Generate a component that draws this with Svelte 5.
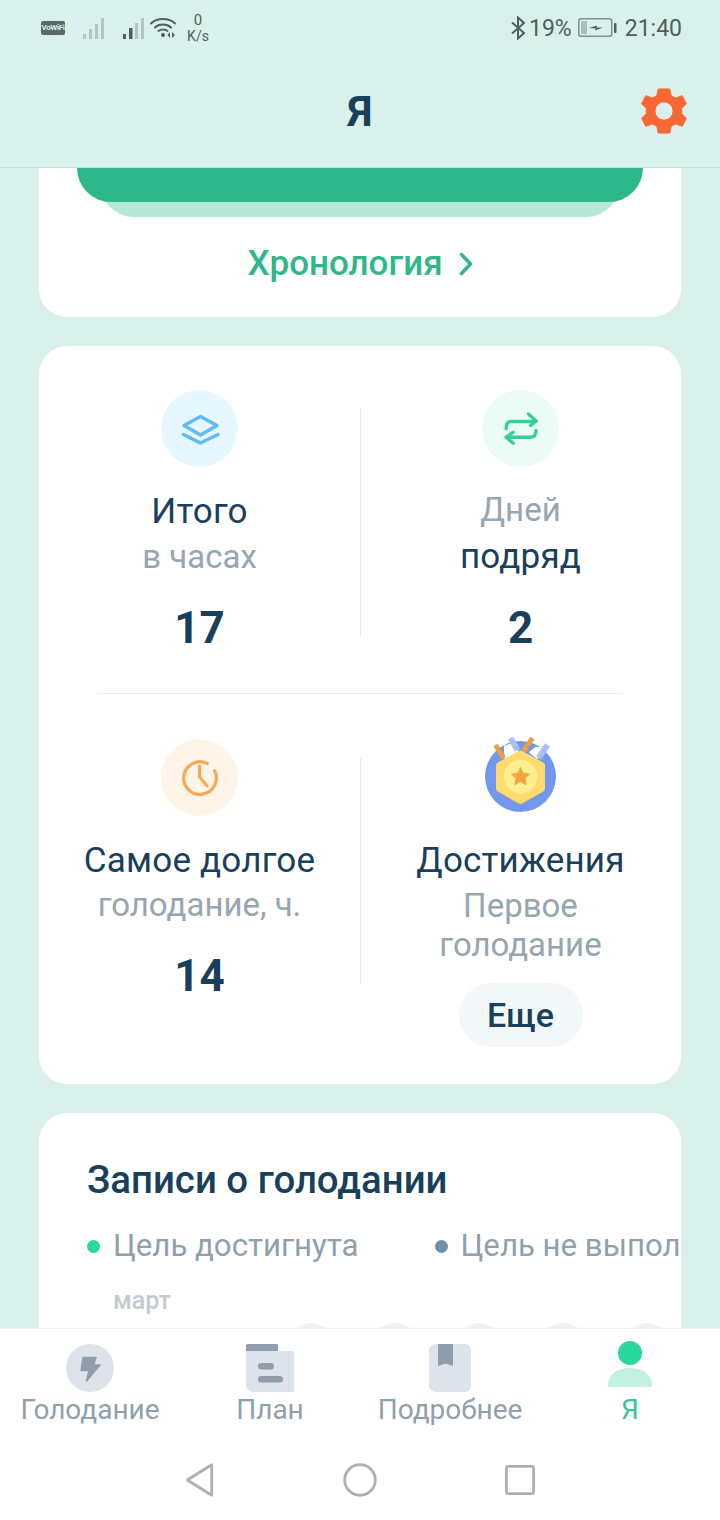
<script>
	const days = [0, 1, 2, 3, 4];
</script>

<div class="page">
	<header class="top">
		<div class="status">
			<div class="status-left">
				<span class="vowifi">VoWiFi</span>
				<svg class="signal first" width="22" height="21" viewBox="0 0 22 21">
					<rect x="0" y="16" width="3" height="5" fill="#b4c6c1" />
					<rect x="6" y="11" width="3" height="10" fill="#b4c6c1" />
					<rect x="12" y="6" width="3" height="15" fill="#b4c6c1" />
					<rect x="18" y="0" width="3" height="21" fill="#b4c6c1" />
				</svg>
				<svg class="signal second" width="22" height="21" viewBox="0 0 22 21">
					<rect x="0" y="16" width="3" height="5" fill="#4f5f5c" />
					<rect x="6" y="10" width="3.5" height="11" fill="#4f5f5c" />
					<rect x="12" y="5" width="3" height="16" fill="#b4c6c1" />
					<rect x="18" y="0" width="3" height="21" fill="#b4c6c1" />
				</svg>
				<svg class="wifi" width="26" height="22" viewBox="0 0 26 22" fill="none" stroke="#4f5f5c" stroke-width="2" stroke-linecap="round">
					<path d="M1 6.5 C7 0.5 19 0.5 25 6.5" />
					<path d="M5 10.5 C9 6.5 17 6.5 21 10.5" />
					<path d="M8.5 14 C11 12 15 12 17.5 14" />
					<circle cx="13" cy="18" r="2" fill="#4f5f5c" stroke="none" />
					<path d="M20 15 L20 21 L17.5 18 Z M22 15 L22 21 L25 18 Z" fill="#4f5f5c" stroke="none" />
				</svg>
				<div class="speed"><span class="zero">0</span><span>K/s</span></div>
			</div>
			<div class="status-right">
				<svg width="16" height="24" viewBox="0 0 16 24" fill="none" stroke="#4f5f5c" stroke-width="2">
					<path d="M2 6.5 L14 17 L8 22.5 L8 1.5 L14 7 L2 17.5" />
				</svg>
				<span class="pct">19%</span>
				<svg class="batt" width="40" height="20" viewBox="0 0 40 20" fill="none">
					<rect x="0.75" y="0.75" width="33" height="17.5" rx="2.5" stroke="#7e918d" stroke-width="1.5" />
					<rect x="3" y="3" width="6" height="13" fill="#adbfba" />
					<path d="M11 10 L19 7.5 L18.5 9.5 L25 9.5 L17 12.5 L17.5 10.5 Z" fill="#4f5f5c" />
					<rect x="36" y="5" width="2.5" height="10" rx="1" fill="#4f5f5c" />
				</svg>
				<span class="clock">21:40</span>
			</div>
		</div>
		<div class="title-row">
			<h1>Я</h1>
			<svg class="gear" width="46" height="46" viewBox="0 0 48 48">
				<path fill="#fb6633" stroke="#fb6633" stroke-width="1" stroke-linejoin="round" fill-rule="evenodd" d="M18 1 H30 L31.5 8 L36 10.5 L43 8 L47.5 16.5 L42.5 21 V27 L47.5 31.5 L43 40 L36 37.5 L31.5 40 L30 47 H18 L16.5 40 L12 37.5 L5 40 L0.5 31.5 L5.5 27 V21 L0.5 16.5 L5 8 L12 10.5 L16.5 8 Z M24 14.5 A9.5 9.5 0 1 0 24 33.5 A9.5 9.5 0 1 0 24 14.5 Z" />
			</svg>
		</div>
	</header>

	<main class="scroll">
		<section class="card history">
			<div class="bars">
				<div class="bar-back"></div>
				<div class="bar-front"></div>
			</div>
			<div class="timeline-link">
				<span>Хронология</span>
				<svg width="14" height="24" viewBox="0 0 14 24" fill="none" stroke="#2fb78a" stroke-width="3.5" stroke-linecap="round" stroke-linejoin="round">
					<path d="M2.5 2.5 L11.5 12 L2.5 21.5" />
				</svg>
			</div>
		</section>

		<section class="card stats">
			<div class="stat-row">
				<div class="stat">
					<div class="icon-circle blue">
						<svg width="40" height="32" viewBox="0 0 40 32" fill="none" stroke="#5dbdf6" stroke-width="3.4" stroke-linecap="round" stroke-linejoin="round">
							<path d="M20.5 3.5 L37 12.5 L20.5 22 L4 12.5 Z" />
							<path d="M3.5 21.5 L20.5 30 L38 21.5" />
						</svg>
					</div>
					<div class="label">Итого</div>
					<div class="sub">в часах</div>
					<div class="value">17</div>
				</div>
				<div class="stat">
					<div class="icon-circle green">
						<svg width="36" height="34" viewBox="0 0 36 34" fill="none" stroke="#37cf99" stroke-width="3.4" stroke-linecap="round" stroke-linejoin="round">
							<path d="M3.2 16.5 Q3.2 9.5 8 9.5 H33" />
							<path d="M25.5 2 L33 9 L27.5 13.5" />
							<path d="M33 18.5 Q33 25.2 27.5 25.2 H3.2" />
							<path d="M10.2 31.2 L3.2 25.2 L10.2 20.2" />
						</svg>
					</div>
					<div class="sub">Дней</div>
					<div class="label tight">подряд</div>
					<div class="value">2</div>
				</div>
			</div>
			<div class="rule"></div>
			<div class="stat-row lower">
				<div class="stat">
					<div class="icon-circle orange">
						<svg width="38" height="38" viewBox="0 0 38 38" fill="none" stroke="#f4aa55" stroke-width="3.2" stroke-linecap="round" stroke-linejoin="round">
							<path d="M26.3 4.5 A16.3 16.3 0 1 0 33.6 11.8" />
							<path d="M18.5 7 V18 L26 26.7" />
						</svg>
					</div>
					<div class="label">Самое долгое</div>
					<div class="sub">голодание, ч.</div>
					<div class="value">14</div>
				</div>
				<div class="stat">
					<svg class="medal" width="76" height="78" viewBox="0 0 76 78">
						<circle cx="37.5" cy="39.5" r="35.5" fill="#7497ee" />
						<path d="M20.8 8.7 L29.2 6 L36.8 15.3 L21.5 22 Z M52.5 10 L61.5 10 L54.2 22 L45.8 15.3 Z" fill="#fff" />
						<path d="M27.5 1 L34.5 13 M64.5 8 L55.5 21" stroke="#a9c0f6" stroke-width="6" fill="none" />
						<path d="M12.5 8 L20.5 21 M49.5 1 L40.5 14" stroke="#ec9f3d" stroke-width="5" fill="none" />
						<path d="M37.5 17 L58.5 28.5 V51 L37.5 63 L16.5 51 V28.5 Z" fill="#f0c050" stroke="#f0c050" stroke-width="7" stroke-linejoin="round" transform="translate(0 0.8)" />
						<path d="M37.5 17 L58.5 28.5 V51 L37.5 63 L16.5 51 V28.5 Z" fill="#fcdc6e" stroke="#fcdc6e" stroke-width="7" stroke-linejoin="round" />
						<circle cx="37.5" cy="39.7" r="16.7" fill="#fdee8f" />
						<path d="M37.5 30.5 L40.1 36.4 L46.5 37.1 L41.8 41.4 L43.1 47.7 L37.5 44.5 L31.9 47.7 L33.2 41.4 L28.5 37.1 L34.9 36.4 Z" fill="#f7a33b" stroke="#f7a33b" stroke-width="1" stroke-linejoin="round" />
					</svg>
					<div class="label">Достижения</div>
					<div class="sub multi">Первое голодание</div>
					<button class="more">Еще</button>
				</div>
			</div>
		</section>

		<section class="card records">
			<h2>Записи о голодании</h2>
			<div class="legend">
				<span class="legend-item"><i class="dot ok"></i>Цель достигнута</span>
				<span class="legend-item"><i class="dot miss"></i>Цель не выполнена</span>
			</div>
			<div class="month">март</div>
			<div class="days">
				{#each days as d (d)}
					<div class="day"></div>
				{/each}
			</div>
		</section>
	</main>

	<nav class="tabs">
		<div class="tab-row">
			<div class="tab">
				<svg width="48" height="48" viewBox="0 0 48 48">
					<circle cx="24" cy="24" r="24" fill="#dde3ea" />
					<path d="M17 13.5 H30 L27.5 21 H34 L20.5 37 L23 26.5 H15 Z" fill="#8f9dac" stroke="#8f9dac" stroke-width="1.5" stroke-linejoin="round" />
				</svg>
				<span>Голодание</span>
			</div>
			<div class="tab">
				<svg width="48" height="48" viewBox="0 0 48 48">
					<path d="M2 0 H32 V7 H0 V2 Q0 0 2 0 Z" fill="#8f9dac" />
					<path d="M0 7 H46 Q48 7 48 9 V48 H8 Q0 48 0 40 Z" fill="#dde3ea" />
					<rect x="12" y="19" width="16" height="6.5" rx="3.2" fill="#8f9dac" />
					<rect x="12" y="32" width="25" height="6.5" rx="3.2" fill="#8f9dac" />
				</svg>
				<span>План</span>
			</div>
			<div class="tab">
				<svg width="42" height="48" viewBox="0 0 42 48">
					<rect x="0" y="0" width="42" height="48" rx="7" fill="#dde3ea" />
					<path d="M9 0 H24 V22 L16.5 19.5 L9 22 Z" fill="#8f9dac" />
				</svg>
				<span>Подробнее</span>
			</div>
			<div class="tab active">
				<svg class="person" width="44" height="51" viewBox="0 0 44 51">
					<circle cx="22" cy="12" r="12" fill="#2ad79c" />
					<path d="M0 44 C0 33 10 27 22 27 C34 27 44 33 44 44 Q44 46 42 46 H2 Q0 46 0 44 Z" fill="#c2f1e0" />
				</svg>
				<span>Я</span>
			</div>
		</div>
		<div class="sys-nav">
			<svg width="32" height="34" viewBox="0 0 32 34" fill="none" stroke="#b0b0b0" stroke-width="2.8" stroke-linejoin="round">
				<path d="M27.7 1.8 V32.2 L3.3 17 Z" />
			</svg>
			<svg width="34" height="34" viewBox="0 0 34 34" fill="none" stroke="#b0b0b0" stroke-width="2.8">
				<circle cx="17" cy="17" r="15.3" />
			</svg>
			<svg width="30" height="30" viewBox="0 0 30 30" fill="none" stroke="#b0b0b0" stroke-width="2.8">
				<rect x="1.4" y="1.4" width="27.2" height="27.2" rx="1.5" />
			</svg>
		</div>
	</nav>
</div>

<style>
	:global(body) {
		margin: 0;
		background: #daf0ea;
	}
	.page {
		width: 720px;
		height: 1520px;
		display: flex;
		flex-direction: column;
		overflow: hidden;
		font-family: Roboto, "Noto Sans", sans-serif;
		color: #19405b;
		background: #daf0ea;
	}

	.top {
		height: 168px;
		flex: none;
		box-sizing: border-box;
		border-bottom: 1px solid #c8e0da;
		background: #daf0ea;
	}
	.status {
		height: 56px;
		display: flex;
		justify-content: space-between;
		align-items: center;
		padding: 0 38px 0 41px;
		color: #4f5f5c;
	}
	.status-left, .status-right {
		display: flex;
		align-items: center;
	}
	.vowifi {
		width: 24px;
		height: 14px;
		background: #5a6966;
		color: #daf0ea;
		border-radius: 2px;
		font-size: 8px;
		font-weight: 700;
		line-height: 14px;
		text-align: center;
		letter-spacing: -0.4px;
		overflow: hidden;
	}
	.signal.first { margin-left: 18px; }
	.signal.second { margin-left: 18px; }
	.wifi { margin-left: 5px; }
	.speed {
		display: flex;
		flex-direction: column;
		align-items: center;
		margin-left: 10px;
		font-size: 14px;
		line-height: 16px;
		width: 24px;
	}
	.zero { font-size: 15px; }
	.pct {
		font-size: 23px;
		margin-left: 3px;
	}
	.batt { margin-left: 6px; }
	.clock {
		font-size: 23px;
		margin-left: 7px;
	}
	.title-row {
		height: 111px;
		position: relative;
		display: flex;
		justify-content: center;
		align-items: center;
	}
	h1 {
		margin: 0;
		font-size: 42px;
		font-weight: 700;
		color: #19405b;
	}
	.gear {
		position: absolute;
		right: 33px;
		top: 32px;
	}

	.scroll {
		flex: 1;
		min-height: 0;
		overflow: hidden;
		display: flex;
		flex-direction: column;
		gap: 29px;
		padding: 0 39px;
	}
	.card {
		flex: none;
		background: #fff;
		border-radius: 28px;
	}

	.history {
		height: 149px;
		border-radius: 0 0 28px 28px;
		display: flex;
		flex-direction: column;
		align-items: center;
	}
	.bars {
		position: relative;
		width: 566px;
		height: 49px;
	}
	.bar-back {
		position: absolute;
		left: 23px;
		right: 23px;
		top: 0;
		height: 49px;
		background: #b6e7d7;
		border-radius: 0 0 34px 34px;
	}
	.bar-front {
		position: absolute;
		left: 0;
		right: 0;
		top: 0;
		height: 34px;
		background: #2cb88a;
		border-radius: 0 0 34px 34px;
	}
	.timeline-link {
		margin-top: 25px;
		display: flex;
		align-items: center;
		gap: 16px;
		font-size: 35px;
		line-height: 44px;
		font-weight: 500;
		color: #2fb78a;
	}

	.stats {
		height: 738px;
		box-sizing: border-box;
		padding-top: 44px;
		display: flex;
		flex-direction: column;
	}
	.stat-row {
		display: grid;
		grid-template-columns: 1fr 1fr;
	}
	.stat {
		display: flex;
		flex-direction: column;
		align-items: center;
		position: relative;
	}
	.stat:first-child::after {
		content: "";
		position: absolute;
		right: -1px;
		top: 19px;
		width: 1px;
		height: 227px;
		background: #e6e9eb;
	}
	.icon-circle {
		width: 77px;
		height: 77px;
		border-radius: 50%;
		display: flex;
		align-items: center;
		justify-content: center;
		margin-bottom: 24px;
	}
	.blue { background: #e6f7ff; }
	.green { background: #ebfbf5; }
	.orange { background: #fff4e8; }
	.medal { margin-bottom: 25px; margin-top: -2px; }
	.label {
		font-size: 35px;
		letter-spacing: 0.2px;
		line-height: 42px;
		color: #19405b;
	}
	.sub {
		font-size: 33px;
		line-height: 42px;
		margin-top: 3px;
		color: #96a6b1;
	}
	.stat > .sub:nth-child(2) {
		margin-top: -2px;
	}
	.label.tight {
		margin-top: 5px;
	}
	.lower .sub {
		margin-top: 2px;
	}
	.lower .sub.multi {
		width: 200px;
		line-height: 39px;
		margin-top: 4px;
		text-align: center;
	}
	.value {
		margin-top: 24px;
		font-size: 44px;
		line-height: 52px;
		font-weight: 700;
		color: #19405b;
	}
	.rule {
		margin: 39px 58px 45px;
		height: 1px;
		background: #e9ebed;
		flex: none;
	}
	.more {
		margin-top: 19px;
		width: 124px;
		height: 64px;
		border: 0;
		border-radius: 32px;
		background: #f2f7fa;
		color: #19405b;
		font: 500 34px Roboto, sans-serif;
	}

	.records {
		padding: 44px 0 0 48px;
		height: 300px;
		overflow: hidden;
		border-radius: 28px 28px 0 0;
	}
	h2 {
		margin: 0;
		font-size: 38.4px;
		line-height: 46px;
		font-weight: 500;
		color: #19405b;
	}
	.legend {
		display: flex;
		gap: 76px;
		margin-top: 22px;
		white-space: nowrap;
		font-size: 31.2px;
		line-height: 42px;
		color: #8fa0ac;
	}
	.legend-item {
		display: flex;
		align-items: center;
	}
	.dot {
		width: 13px;
		height: 13px;
		border-radius: 50%;
		margin-right: 13px;
	}
	.dot.ok { background: #2ad79c; }
	.dot.miss { background: #6f8fa9; }
	.month {
		margin: 17px 0 0 26px;
		font-size: 25px;
		line-height: 34px;
		font-weight: 500;
		color: #c3cbd1;
	}
	.days {
		display: flex;
		gap: 40px;
		margin: 5px 0 0 202px;
	}
	.day {
		width: 44px;
		height: 44px;
		flex: none;
		border-radius: 50%;
		background: #eef2f3;
	}

	.tabs {
		flex: none;
		height: 192px;
		background: #fff;
		box-sizing: border-box;
		border-top: 1px solid #eef0f1;
		position: relative;
		box-shadow: 0 -1px 2px rgba(0, 0, 0, 0.02);
	}
	.tab-row {
		display: flex;
		height: 108px;
		padding-top: 15px;
		box-sizing: border-box;
	}
	.tab {
		width: 180px;
		display: flex;
		flex-direction: column;
		align-items: center;
		font-size: 28px;
		line-height: 36px;
		color: #8ea0ad;
		white-space: nowrap;
	}
	.person { margin-top: -3px; }
	.tab.active { color: #37c795; }
	.sys-nav {
		display: grid;
		grid-template-columns: repeat(3, 160px);
		justify-content: center;
		justify-items: center;
		align-items: center;
		height: 72px;
		margin-top: 7px;
	}
</style>
